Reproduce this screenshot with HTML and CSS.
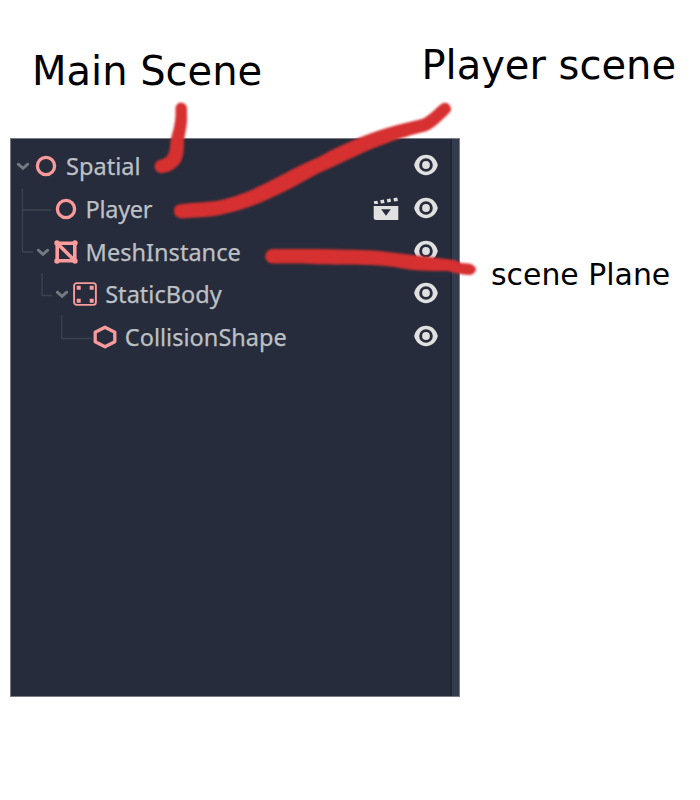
FILE: index.html
```
<!DOCTYPE html>
<html lang="en">
<head>
<meta charset="utf-8">
<title>Scene tree</title>
<link rel="stylesheet" href="styles.css">
</head>
<body>
<svg class="symbols" aria-hidden="true">
  <symbol id="caret" viewBox="0 0 14 14"><path d="M2.300 5.200 7 9.400 11.700 5.200" fill="none" stroke="#747982" stroke-width="2.900" stroke-linecap="round"/></symbol>
  <symbol id="spatial" viewBox="0 0 24 24"><circle cx="12" cy="12" r="8.600" fill="none" stroke="#f99a9b" stroke-width="3.300"/></symbol>
  <symbol id="mesh" viewBox="0 0 24 24"><path d="M3.200 3.200h17.600v17.600H3.200zM3.200 3.200l17.600 17.600" fill="none" stroke="#fc9c9c" stroke-width="3.600"/><g fill="#fc9c9c"><circle cx="3" cy="3" r="2.700"/><circle cx="21" cy="3" r="2.700"/><circle cx="3" cy="21" r="2.700"/><circle cx="21" cy="21" r="2.700"/></g></symbol>
  <symbol id="body" viewBox="0 0 24 24"><rect x="1.100" y="1.100" width="21.800" height="21.800" rx="2.600" fill="none" stroke="#f99a9b" stroke-width="1.900"/><path d="M3.700 3.700h4v4h-4zM16.700 3.700h4v4h-4zM3.700 16.700h4v4h-4zM16.700 16.700h4v4h-4z" fill="#f99a9b"/></symbol>
  <symbol id="shape" viewBox="0 0 24 24"><path d="M12 2.200 21.800 7.200V16.800L12 21.800 2.200 16.800V7.200z" fill="none" stroke="#f99a9b" stroke-width="3.300" stroke-linejoin="round"/></symbol>
  <symbol id="eye" viewBox="0 0 24 24"><path fill-rule="evenodd" fill="#e0e0e0" d="M12 1.800C6 1.800 1.800 6 .3 11.400q-.2.600 0 1.200C1.800 18 6 22.200 12 22.200S22.200 18 23.700 12.600q.2-.6 0-1.200C22.200 6 18 1.800 12 1.800zM12 5.200a6.800 6.800 0 1 1 0 13.600 6.800 6.800 0 0 1 0-13.600zM12 8.100a3.900 3.900 0 1 0 0 7.800 3.900 3.900 0 0 0 0-7.800z"/></symbol>
  <symbol id="clapper" viewBox="0 0 26 24"><path fill="#e0e0e0" fill-rule="evenodd" d="M.7 9h24.600v14H3.200Q.7 23 .7 20.500zM8.200 12.200 13 18.800l4.800-6.600z"/><path fill="#e0e0e0" d="M.8 4.300l3.600-.6.700 3.300H1.300zM7.200 3.200l3.600-.6.700 3.300-3.600.5zM13.800 2.200l3.600-.6.700 3.200-3.600.6zM20.400 1.200l3.800-.6.700 3.300-3.800.5z"/></symbol>
</svg>
<header class="captions">
  <h1 class="caption main">Main Scene</h1>
  <h1 class="caption player">Player scene</h1>
</header>
<main class="content">
  <section class="panel">
    <div class="tree">
      <svg class="guides" viewBox="0 0 100 220" aria-hidden="true"><path d="M11.500 49.500v63.500M11.500 71h29M11.500 113h10.500M31 134v22.500h10M50.700 176.500v23h30"/></svg>
      <div class="row depth-0"><svg class="caret"><use href="#caret"/></svg><svg class="icon"><use href="#spatial"/></svg><span class="name">Spatial</span><svg class="icon eye"><use href="#eye"/></svg></div>
      <div class="row depth-1"><span class="caret"></span><svg class="icon"><use href="#spatial"/></svg><span class="name player-name">Player</span><svg class="clapper"><use href="#clapper"/></svg><svg class="icon eye"><use href="#eye"/></svg></div>
      <div class="row depth-1"><svg class="caret"><use href="#caret"/></svg><svg class="icon"><use href="#mesh"/></svg><span class="name">MeshInstance</span><svg class="icon eye"><use href="#eye"/></svg></div>
      <div class="row depth-2"><svg class="caret"><use href="#caret"/></svg><svg class="icon"><use href="#body"/></svg><span class="name">StaticBody</span><svg class="icon eye"><use href="#eye"/></svg></div>
      <div class="row depth-3"><span class="caret"></span><svg class="icon"><use href="#shape"/></svg><span class="name">CollisionShape</span><svg class="icon eye"><use href="#eye"/></svg></div>
    </div>
    <div class="divider"></div>
  </section>
  <p class="plane">scene Plane</p>
</main>
<svg class="strokes" viewBox="0 0 700 800" aria-hidden="true">
  <path d="M181 102.500Q175.500 103 175.500 109C176 118 174.500 125 173 131Q170 140 170 147Q169 158 161 159.500Q154 161 154.500 167Q156 174 163 173Q173 172 180 163Q184.500 157 184 140C186 130 187.500 123 187 115V108.500Q186.500 103 181 102.500z"/>
  <path d="M174 211Q174 204 182 204C200 202 213 202 221 200C259 191 280 173 319 157C345 142 372 132 397 125L422 119C429 116 435 109 440 105Q444 101.500 448 103.500Q453 108 450 112C444 118 436 127 427 131C415 134 400 138 385 144C362 152 345 162 319 173C286 191 259 207 220 215C205 218 195 217 182 218.500Q174 218 174 211z"/>
  <path d="M265 256.500Q266 249 273 249H320C345 250 365 249.500 380 251C405 254 430 257 455 260L461 263L469 263.500Q476 265 476 270Q474 275 469 275Q457 274 448 271C430 271 422 271 405 269C390 266 378 265 365 265C345 264 330 265.500 303 263.500H273Q266 263 265 256.500z"/>
</svg>
</body>
</html>
```
FILE: styles.css
```
* { box-sizing: border-box; }
body {
  margin: 0;
  width: 700px;
  height: 800px;
  overflow: hidden;
  position: relative;
  background: #fff;
  color: #000;
  font-family: "DejaVu Sans", sans-serif;
}
.symbols { display: none; }
.captions {
  display: flex;
  justify-content: space-between;
  height: 138px;
  padding: 42px 24px 0 32px;
}
.caption {
  margin: 0;
  font-size: 40px;
  line-height: 46px;
  font-weight: 400;
  white-space: nowrap;
}
.main { padding-top: 6px; }
.content { display: flex; padding-left: 10px; }
.panel {
  display: flex;
  width: 450px;
  height: 559px;
  flex: none;
  border: 1px solid #777b83;
  background: #262c3b;
}
.tree {
  position: relative;
  flex: 1;
  padding-top: 6px;
}
.divider {
  width: 9px;
  border-left: 2px solid #202531;
  background: #333b4f;
}
.guides {
  position: absolute;
  left: 0;
  top: 0;
  width: 100px;
  height: 220px;
  fill: none;
  stroke: #3c424f;
  stroke-width: 1.3;
}
.row {
  display: flex;
  align-items: center;
  height: 42.7px;
  padding: 0 12px 0 5px;
}
.depth-1 { padding-left: 24.6px; }
.depth-2 { padding-left: 44.2px; }
.depth-3 { padding-left: 63.8px; }
.caret { width: 14px; height: 14px; margin-right: 4px; flex: none; }
.icon { width: 24px; height: 24px; flex: none; }
.name {
  flex: 1;
  margin-left: 8px;
  color: #bdc0c5;
  font: 23.5px/32px "Noto Sans", sans-serif;
  letter-spacing: .03px;
  -webkit-text-stroke: .25px #bdc0c5;
  white-space: nowrap;
}
.player-name { letter-spacing: -.3px; }
.clapper { width: 26px; height: 24px; margin-right: 15px; }
.eye { position: relative; top: -1px; }
.plane {
  margin: 119px 0 0 31px;
  font-size: 29.9px;
  line-height: 36px;
  white-space: nowrap;
}
.strokes {
  position: absolute;
  left: 0;
  top: 0;
  width: 700px;
  height: 800px;
  fill: #d63031;
  filter: blur(.8px);
}
```
